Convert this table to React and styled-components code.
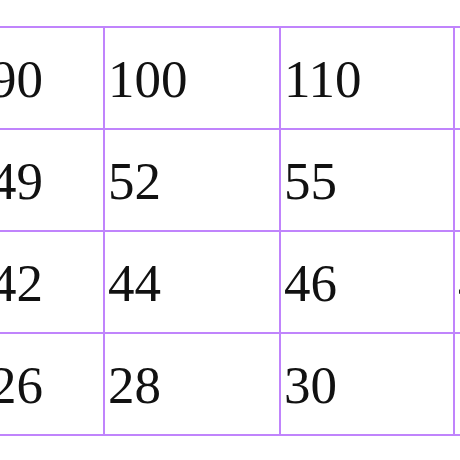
import React from 'react';
import styled, { createGlobalStyle } from 'styled-components';

const GlobalStyle = createGlobalStyle`
  html, body {
    margin: 0;
    padding: 0;
    background: #fff;
  }
`;

const Viewport = styled.div`
  width: 460px;
  height: 460px;
  overflow: hidden;
  padding-top: 26px;
  box-sizing: border-box;
`;

const SizeTable = styled.table`
  border-collapse: collapse;
  margin-left: -15px;
  table-layout: fixed;
  width: ${props => props.$w}px;
  font-family: "Liberation Serif", "Times New Roman", serif;
  color: #111;
`;

const Cell = styled.td`
  width: ${props => props.$w}px;
  height: 102px;
  padding: 2px 0 0 3px;
  border: 2px solid #c084fc;
  font-size: 53px;
  line-height: 1;
  vertical-align: middle;
  white-space: nowrap;
  box-sizing: border-box;
`;

const widths = [118, 176, 174, 176];

const rows = [
  ['90', '100', '110', '120'],
  ['49', '52', '55', '58'],
  ['42', '44', '46', '48'],
  ['26', '28', '30', '32'],
];

const App = () => (
  <>
    <GlobalStyle />
    <Viewport>
      <SizeTable $w={widths.reduce((a, b) => a + b, 0)}>
        <tbody>
          {rows.map((row, i) => (
            <tr key={i}>
              {row.map((value, j) => (
                <Cell key={j} $w={widths[j]}>{value}</Cell>
              ))}
            </tr>
          ))}
        </tbody>
      </SizeTable>
    </Viewport>
  </>
);

export default App;
